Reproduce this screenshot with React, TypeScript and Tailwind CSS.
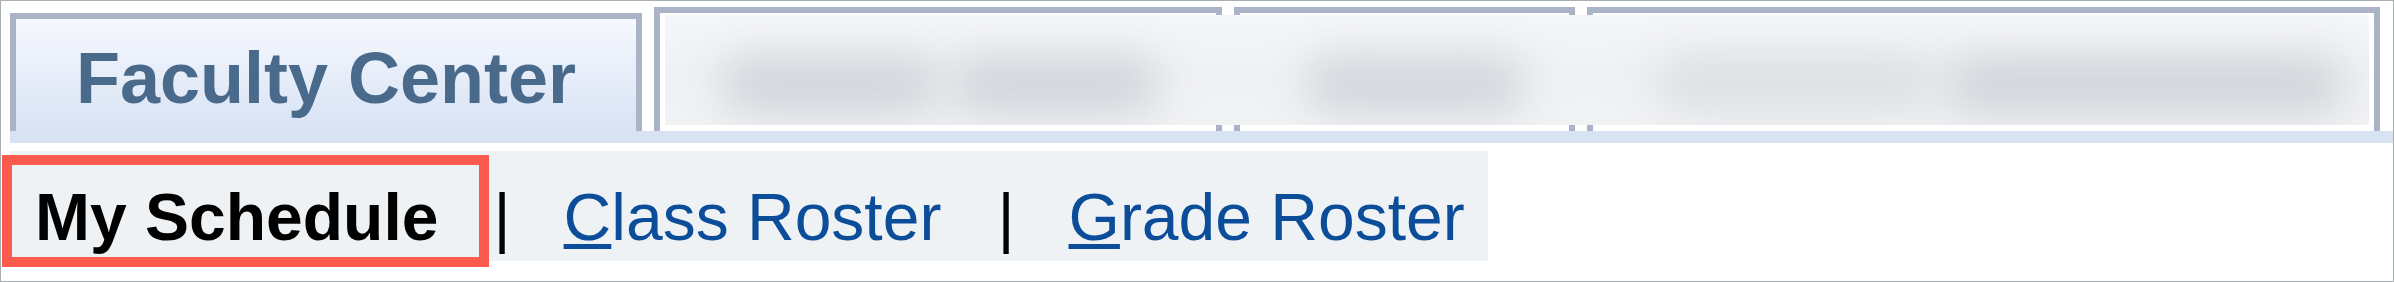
import React from 'react';

const BlurredTabs: React.FC = () => {
  return (
    <div className="relative ml-[12px] flex h-[124px] gap-[12px]">
      {/* tab frames, their labels are hidden under the blur */}
      <div className="h-full w-[568px] border-x-[6px] border-t-[6px] border-[#aab4c6] bg-white" />
      <div className="h-full w-[341px] border-x-[6px] border-t-[6px] border-[#aab4c6] bg-white" />
      <div className="h-full w-[793px] border-x-[6px] border-t-[6px] border-[#aab4c6] bg-white" />

      {/* privacy blur over the other tab labels */}
      <div className="absolute left-[11px] right-[11px] top-[8px] bottom-[6px] flex items-start overflow-hidden bg-linear-to-b from-[#f5f6f8] via-[#eff1f3] to-[#f1f2f4] pt-[40px]">
        <div className="ml-[55px] h-[60px] w-[220px] rounded-full bg-[#d2d6dc] blur-[20px]" />
        <div className="ml-[10px] h-[60px] w-[210px] rounded-full bg-[#d2d6dc] blur-[20px]" />
        <div className="ml-[145px] h-[60px] w-[220px] rounded-full bg-[#d3d7dd] blur-[20px]" />
        <div className="ml-[130px] h-[56px] w-[280px] rounded-full bg-[#dcdfe3] blur-[22px]" />
        <div className="ml-[10px] h-[60px] w-[400px] rounded-full bg-[#d2d5db] blur-[20px]" />
      </div>
    </div>
  );
};

const App: React.FC = () => {
  return (
    <div className="relative h-[282px] w-[2394px] overflow-hidden border border-[#a9aeb1] bg-white font-['Liberation_Sans',Arial,sans-serif]">
      {/* tab row */}
      <div className="flex pl-[9px] pt-[6px]">
        <div className="mt-[6px] h-[118px] w-[632px] border-x-[6px] border-t-[6px] border-[#aab4c6] bg-linear-to-b from-[#f6f8fe] to-[#d8e3f4] text-center">
          <span className="block pt-[23px] text-[72px] font-bold leading-none text-[#4a6a8c]">Faculty Center</span>
        </div>
        <BlurredTabs />
      </div>
      <div className="ml-[9px] h-[12px] bg-[#d7e2f3]" />

      {/* sub navigation */}
      <div className="ml-[9px] mt-[8px] flex h-[110px] w-[1478px] items-baseline bg-[#eff2f4] pt-[33px] text-[66px] leading-none">
        <span className="ml-[25px] font-bold text-black">My Schedule</span>
        <span className="ml-[55px] text-black">|</span>
        <a href="#" className="ml-[53px] text-[#0b4d99]">
          <span className="underline decoration-[5px] underline-offset-[4px]">C</span>lass Roster
        </a>
        <span className="ml-[56px] text-black">|</span>
        <a href="#" className="ml-[54px] text-[#0b4d99]">
          <span className="underline decoration-[5px] underline-offset-[4px]">G</span>rade Roster
        </a>
      </div>

      {/* highlight around current item */}
      <div className="absolute left-[1px] top-[154px] h-[112px] w-[487px] border-[10px] border-[#fb5a4d]" />
    </div>
  );
};

export default App;
